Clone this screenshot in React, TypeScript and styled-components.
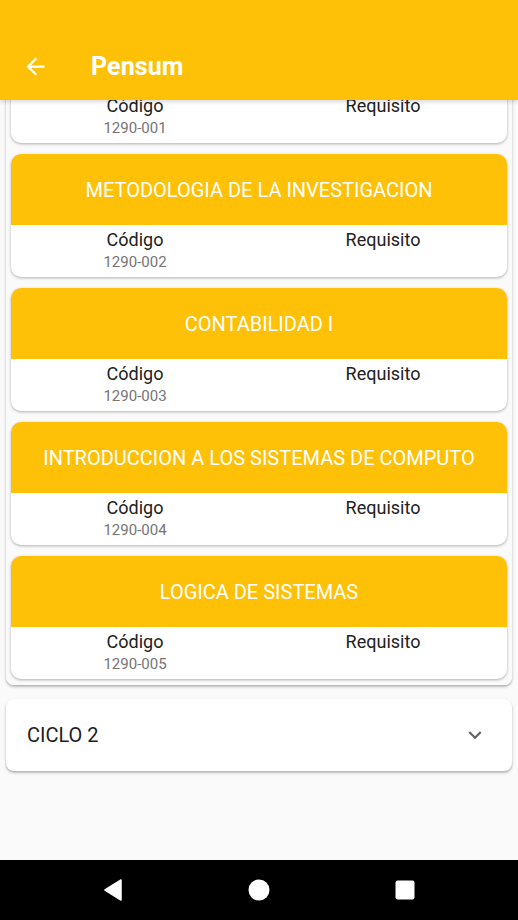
import React, { useLayoutEffect, useRef } from "react";
import styled, { createGlobalStyle } from "styled-components";

const Global = createGlobalStyle`
  html, body { margin: 0; padding: 0; }
  body { font-family: Roboto, "Noto Sans", sans-serif; background: #fafafa; }
`;

const Screen = styled.div`
  width: 518px;
  height: 920px;
  display: flex;
  flex-direction: column;
  background: #fafafa;
  overflow: hidden;
  position: relative;
`;

const AppBar = styled.header`
  height: 100px;
  flex: none;
  background: #ffc107;
  display: flex;
  align-items: flex-end;
  padding: 0 0 18px 22px;
  box-sizing: border-box;
  gap: 42px;
  position: relative;
  z-index: 2;
  box-shadow: 0 2px 4px rgba(0,0,0,0.15);
`;

const Title = styled.h1`
  margin: 0;
  color: #fff;
  font-size: 25px;
  font-weight: 700;
  line-height: 30px;
  letter-spacing: 0.1px;
`;

const Scroll = styled.main`
  flex: 1;
  overflow: hidden;
`;

const Content = styled.div`
  padding: 6px 6px 300px;
  display: flex;
  flex-direction: column;
  gap: 14px;
`;

const Panel = styled.section`
  background: #fff;
  border-radius: 8px;
  box-shadow: 0 2px 3px rgba(0,0,0,0.22), 0 1px 2px rgba(0,0,0,0.12);
`;

const PanelHeader = styled.div`
  height: 72px;
  display: flex;
  align-items: center;
  justify-content: space-between;
  padding: 0 24px 0 21px;
  font-size: 20px;
  color: #212121;
`;

const CardList = styled.div`
  display: flex;
  flex-direction: column;
  gap: 11px;
  padding: 5px 5px 6px;
  background: #fafafa;
  border-radius: 0 0 8px 8px;
`;

const Card = styled.article`
  border-radius: 10px;
  overflow: hidden;
  background: #fff;
  box-shadow: 0 1px 3px rgba(0,0,0,0.3);
`;

const CardHead = styled.div`
  height: 71px;
  background: #ffc107;
  color: #fff;
  display: flex;
  align-items: center;
  justify-content: center;
  font-size: 20px;
  box-sizing: border-box;
`;

const CardBody = styled.div`
  height: 52px;
  display: grid;
  grid-template-columns: 1fr 1fr;
  padding-top: 4px;
  box-sizing: border-box;
`;

const Col = styled.div`
  display: flex;
  flex-direction: column;
  align-items: center;
`;

const Label = styled.div`
  font-size: 18px;
  line-height: 21px;
  color: #212121;
`;

const Value = styled.div`
  font-size: 15px;
  line-height: 18px;
  margin-top: 3px;
  color: #757575;
`;

const NavBar = styled.nav`
  height: 60px;
  flex: none;
  background: #000;
  display: grid;
  grid-template-columns: 1fr 1fr 1fr;
  align-items: center;
  justify-items: center;
  padding: 0 40px;
`;

const subjects = [
  ["FUNDAMENTOS", "1290-001"],
  ["METODOLOGIA DE LA INVESTIGACION", "1290-002"],
  ["CONTABILIDAD I", "1290-003"],
  ["INTRODUCCION A LOS SISTEMAS DE COMPUTO", "1290-004"],
  ["LOGICA DE SISTEMAS", "1290-005"],
];

const Chevron = ({ up }: { up?: boolean }) => (
  <svg width="26" height="26" viewBox="0 0 24 24">
    <path
      d={up ? "M7.41 15.41 12 10.83l4.59 4.58L18 14l-6-6-6 6z" : "M7.41 8.59 12 13.17l4.59-4.58L18 10l-6 6-6-6z"}
      fill="#616161"
    />
  </svg>
);

export default function App() {
  const ref = useRef<HTMLDivElement>(null);
  useLayoutEffect(() => {
    if (ref.current) ref.current.scrollTop = 163;
  }, []);
  return (
    <Screen>
      <Global />
      <AppBar>
        <svg width="27" height="27" viewBox="0 0 24 24" style={{ marginBottom: 2 }}>
          <path d="M20 11H7.83l5.59-5.59L12 4l-8 8 8 8 1.41-1.41L7.83 13H20v-2z" fill="#fff" />
        </svg>
        <Title>Pensum</Title>
      </AppBar>
      <Scroll ref={ref}>
        <Content>
          <Panel>
            <PanelHeader>
              CICLO 1
              <Chevron up />
            </PanelHeader>
            <CardList>
              {subjects.map(([name, code]) => (
                <Card key={code}>
                  <CardHead>{name}</CardHead>
                  <CardBody>
                    <Col>
                      <Label>Código</Label>
                      <Value>{code}</Value>
                    </Col>
                    <Col>
                      <Label>Requisito</Label>
                    </Col>
                  </CardBody>
                </Card>
              ))}
            </CardList>
          </Panel>
          <Panel>
            <PanelHeader>
              CICLO 2
              <Chevron />
            </PanelHeader>
          </Panel>
        </Content>
      </Scroll>
      <NavBar>
        <svg width="20" height="22" viewBox="0 0 20 22">
          <path d="M18 1 L2 11 L18 21 Z" fill="#fff" stroke="#fff" strokeWidth="1.5" strokeLinejoin="round" />
        </svg>
        <svg width="22" height="22" viewBox="0 0 22 22">
          <circle cx="11" cy="11" r="10.5" fill="#fff" />
        </svg>
        <svg width="20" height="20" viewBox="0 0 20 20">
          <rect x="0.5" y="0.5" width="19" height="19" rx="2" fill="#fff" />
        </svg>
      </NavBar>
    </Screen>
  );
}
